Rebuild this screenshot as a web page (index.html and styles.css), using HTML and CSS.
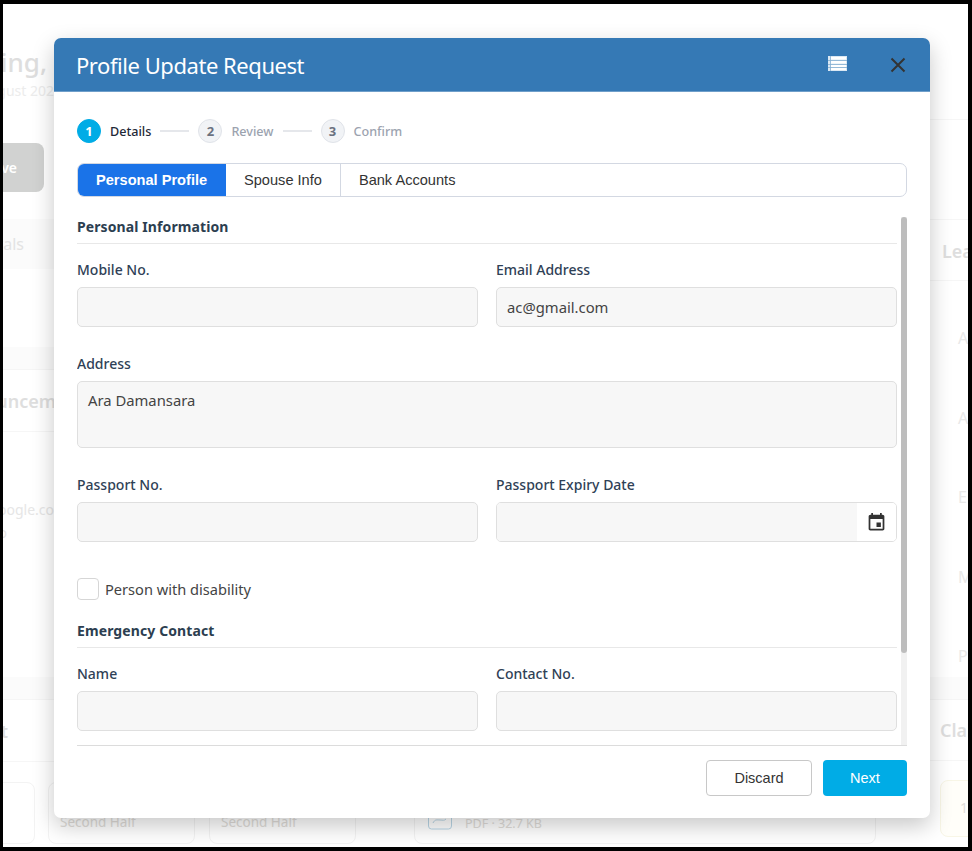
FILE: index.html
```html
<!DOCTYPE html>
<html lang="en">
<head>
    <meta charset="UTF-8">
    <meta name="viewport" content="width=device-width, initial-scale=1.0">
    <title>Profile Update Request</title>
    <link rel="stylesheet" href="styles.css">
</head>
<body>
    <div class="frame">
        <!-- dashboard behind the dialog -->
        <div class="dash">
            <div class="dash-top">
                <div class="dash-left">
                    <h2 class="greeting">Good Morning,</h2>
                    <p class="today">Monday, 4 August 202</p>
                    <div class="leave-btn">Apply Leave</div>
                    <div class="strip">Approvals</div>
                    <div class="band band-first"></div>
                    <div class="dash-head head-news">Announcements</div>
                    <div class="news">
                        <p>https://www.google.co</p>
                        <p>info</p>
                    </div>
                    <div class="band"></div>
                    <div class="dash-head head-pay">Payment</div>
                </div>
                <div class="dash-right">
                    <div class="dash-head head-leave">Leave Balance</div>
                    <ul class="leave-list">
                        <li>Annual</li>
                        <li>Advance</li>
                        <li>Emergency</li>
                        <li>Medical</li>
                        <li>Paternity</li>
                    </ul>
                    <div class="band"></div>
                    <div class="dash-head head-claims">Claims</div>
                </div>
            </div>
            <div class="dash-bottom">
                <div class="slot slot-a"></div>
                <div class="slot slot-b">Second Half</div>
                <div class="slot slot-c">Second Half</div>
                <div class="slot slot-file">
                    <svg class="file-icon" viewBox="0 0 24 16" width="24" height="16" fill="none" stroke="#b9d6e6" stroke-width="1">
                        <rect x="0.5" y="-8" width="23" height="23" rx="3"/>
                        <path d="M5 9c2-4 4-3 7-3s4 1 6-1"/>
                    </svg>
                    <span>PDF · 32.7 KB</span>
                </div>
                <div class="slot slot-claim">1</div>
            </div>
        </div>

        <div class="modal">
            <div class="modal-header">
                <h1>Profile Update Request</h1>
                <svg class="list-icon" viewBox="0 0 19 15" width="19" height="15">
                    <path fill="#dbe8f3" d="M0 0h19v15H0z"/>
                    <path fill="#fff" d="M3 1h15v2.500H3zM3 5h15v2.500H3zM3 9h15v2H3zM3 12h15v2H3z"/>
                    <path fill="#7fabd0" d="M0 4h19v.7H0zM0 8h19v.7H0zM0 11.200h19v.7H0zM2 0h.7v15H2z"/>
                </svg>
                <svg class="close-icon" viewBox="0 0 16 16" width="16" height="16" fill="none" stroke="#333" stroke-width="2">
                    <path d="M1.500 1.500l13 13M14.500 1.500l-13 13"/>
                </svg>
            </div>
            <div class="modal-body">
                <div class="stepper">
                    <span class="step-num active">1</span>
                    <span class="step-name active">Details</span>
                    <span class="step-line"></span>
                    <span class="step-num">2</span>
                    <span class="step-name">Review</span>
                    <span class="step-line"></span>
                    <span class="step-num">3</span>
                    <span class="step-name">Confirm</span>
                </div>
                <div class="tabs">
                    <div class="tab active">Personal Profile</div>
                    <div class="tab">Spouse Info</div>
                    <div class="tab">Bank Accounts</div>
                </div>
                <div class="scroll-area">
                    <div class="scroll-content">
                        <h3 class="section-title">Personal Information</h3>
                        <div class="row">
                            <div class="field">
                                <label for="mobile">Mobile No.</label>
                                <input id="mobile" type="text">
                            </div>
                            <div class="field">
                                <label for="email">Email Address</label>
                                <input id="email" type="text" value="ac@gmail.com">
                            </div>
                        </div>
                        <div class="field">
                            <label for="address">Address</label>
                            <textarea id="address">Ara Damansara</textarea>
                        </div>
                        <div class="row">
                            <div class="field">
                                <label for="passport">Passport No.</label>
                                <input id="passport" type="text">
                            </div>
                            <div class="field">
                                <label for="expiry">Passport Expiry Date</label>
                                <div class="date-input">
                                    <input id="expiry" type="text">
                                    <span class="date-btn">
                                        <svg viewBox="0 0 24 24" width="21" height="21" fill="#333">
                                            <path d="M17 12h-5v5h5v-5zM16 1v2H8V1H6v2H5c-1.110 0-1.990.9-1.990 2L3 19c0 1.100.89 2 2 2h14c1.100 0 2-.9 2-2V5c0-1.100-.9-2-2-2h-1V1h-2zm3 18H5V8h14v11z"/>
                                        </svg>
                                    </span>
                                </div>
                            </div>
                        </div>
                        <label class="check">
                            <input type="checkbox">
                            <span>Person with disability</span>
                        </label>
                        <h3 class="section-title">Emergency Contact</h3>
                        <div class="row">
                            <div class="field">
                                <label for="contact-name">Name</label>
                                <input id="contact-name" type="text">
                            </div>
                            <div class="field">
                                <label for="contact-no">Contact No.</label>
                                <input id="contact-no" type="text">
                            </div>
                        </div>
                    </div>
                    <div class="scroll-track">
                        <div class="scroll-thumb"></div>
                    </div>
                </div>
            </div>
            <div class="modal-footer">
                <button class="btn-discard">Discard</button>
                <button class="btn-next">Next</button>
            </div>
        </div>
    </div>
</body>
</html>
```

FILE: styles.css
```css
* {
    box-sizing: border-box;
}

body {
    margin: 0;
    font-family: "Noto Sans", "Open Sans", sans-serif;
    background: #000;
}

.frame {
    position: relative;
    width: 972px;
    height: 851px;
    border: solid #000;
    border-width: 4px 4px 4px 3px;
    background: #fff;
    overflow: hidden;
}

/* background page */
.dash {
    display: flex;
    flex-direction: column;
    height: 100%;
    color: #dedede;
}

.dash-top {
    display: flex;
    justify-content: space-between;
    height: 758px;
    flex: none;
}

.dash-left {
    width: 51px;
    display: flex;
    flex-direction: column;
    align-items: flex-end;
    white-space: nowrap;
}

.dash-left > * {
    flex: none;
}

.dash-right {
    width: 39px;
    white-space: nowrap;
    display: flex;
    flex-direction: column;
    overflow: hidden;
    border-top: 1px solid #f6f6f6;
    margin-top: 115px;
}

.greeting {
    margin: 39px 7px 0 0;
    font-size: 26px;
    font-weight: 500;
    line-height: 38px;
}

.today {
    margin: 0;
    font-size: 14px;
    line-height: 20px;
    color: #ececec;
}

.leave-btn {
    width: 150px;
    height: 49px;
    margin: 42px 10px 0 0;
    padding-right: 27px;
    background: #d1d2d1;
    border-radius: 8px;
    color: #fff;
    font-size: 14px;
    font-weight: 600;
    line-height: 49px;
    text-align: right;
}

.strip {
    width: 200px;
    height: 50px;
    margin-top: 27px;
    padding-right: 30px;
    background: #fbfbfb;
    font-size: 16px;
    line-height: 50px;
    text-align: right;
    color: #e3e3e3;
}

.band {
    width: 100%;
    height: 23px;
    background: #fbfbfb;
    border-bottom: 1px solid #f5f5f5;
}

.band-first {
    margin-top: 78px;
}

.dash-head {
    width: 100%;
    height: 62px;
    font-size: 18px;
    font-weight: 600;
    line-height: 62px;
    border-bottom: 1px solid #f6f6f6;
    overflow: hidden;
}

.head-news {
    text-indent: -53px;
}

.head-pay {
    text-indent: -73px;
}

.head-leave {
    margin-top: 99px;
    padding-left: 13px;
    border-top: 1px solid #f6f6f6;
}

.head-claims {
    padding-left: 11px;
    margin-top: -1px;
}

.news {
    height: 245px;
    width: 100%;
    padding-top: 66px;
    color: #e6e6e6;
    font-size: 14px;
    line-height: 23px;
    display: flex;
    flex-direction: column;
}

.news p {
    margin: 0;
    align-self: flex-end;
}

.news p:last-child {
    margin-right: 47px;
}

.leave-list {
    list-style: none;
    margin: 0;
    padding: 0 0 0 29px;
    height: 396px;
    font-size: 16px;
    color: #e8e8e8;
}

.leave-list li {
    height: 79.500px;
    padding-top: 45px;
    line-height: 24px;
}

.dash-bottom {
    display: flex;
    height: 62px;
    margin-top: 20px;
    flex: none;
}

.slot {
    flex: none;
    height: 62px;
    border: 1px solid #f3f3f3;
    border-radius: 8px;
    font-size: 13.500px;
    line-height: 18px;
    color: #e0ddd9;
    padding: 30px 0 0 11px;
}

.slot-a {
    width: 42px;
    margin-left: -10px;
}

.slot-b {
    width: 147px;
    margin-left: 13px;
}

.slot-c {
    width: 147px;
    margin-left: 14px;
}

.slot-file {
    width: 462px;
    margin-left: 58px;
    padding: 31px 0 0 13px;
    display: flex;
    gap: 13px;
    font-size: 12.500px;
}

.file-icon {
    flex: none;
}

.slot-file span {
    padding-top: 1px;
}

.slot-claim {
    width: 120px;
    height: 57px;
    margin: -2px 0 0 64px;
    background: #fffef9;
    border-color: #f8f6e6;
    padding: 18px 0 0 19px;
    font-size: 14px;
}

/* dialog */
.modal {
    position: absolute;
    left: 51px;
    top: 34px;
    width: 876px;
    height: 780px;
    display: flex;
    flex-direction: column;
    background: #fff;
    border-radius: 7px;
    box-shadow: 0 8px 22px rgba(0, 0, 0, 0.22);
    overflow: hidden;
}

.modal-header {
    height: 54px;
    flex: none;
    display: flex;
    align-items: center;
    padding: 0 24px 0 22px;
    background: #3579b5;
    border-bottom: 1px solid #6f9fca;
}

.modal-header h1 {
    margin: 0;
    flex: 1;
    font-size: 22px;
    font-weight: 400;
    letter-spacing: -0.45px;
    color: #fff;
}

.list-icon {
    margin: 0 43px 3px 0;
}

.close-icon {
    margin-top: 1px;
}

.modal-body {
    flex: 1;
    min-height: 0;
    display: flex;
    flex-direction: column;
    padding: 26px 23px 0;
}

.stepper {
    display: flex;
    align-items: center;
    height: 25px;
    flex: none;
    font-size: 12.600px;
    font-weight: 500;
    color: #9ca3af;
}

.step-num {
    width: 24px;
    height: 24px;
    border-radius: 50%;
    border: 1px solid #e0e3e9;
    background: #f1f3f6;
    color: #6b7280;
    font-size: 13px;
    font-weight: 700;
    line-height: 22px;
    text-align: center;
}

.step-num.active {
    border-color: #00ace6;
    background: #00ace6;
    color: #fff;
}

.step-name {
    margin-left: 9px;
    padding-top: 1px;
}

.step-name.active {
    color: #1f2937;
}

.step-line {
    width: 29px;
    height: 2px;
    margin: 0 9px;
    background: #e5e7eb;
}

.tabs {
    display: flex;
    flex: none;
    height: 34px;
    margin: 20px 0;
    border: 1px solid #d3d8e2;
    border-radius: 7px;
    overflow: hidden;
    font-family: "Liberation Sans", Arial, sans-serif;
    font-size: 14.600px;
    color: #333;
}

.tab {
    padding: 0 18px;
    line-height: 32px;
    border-right: 1px solid #d3d8e2;
}

.tab:last-child {
    border-right: none;
}

.tab.active {
    width: 148px;
    background: #1a73e8;
    color: #fff;
    font-weight: 700;
    border-right: none;
}

.scroll-area {
    flex: 1;
    min-height: 0;
    display: flex;
    border-bottom: 1px solid #dcdcdc;
}

.scroll-content {
    flex: 1;
    min-width: 0;
    overflow: hidden;
    padding-right: 4px;
}

.scroll-track {
    flex: none;
    width: 6px;
    background: #f1f1f1;
}

.scroll-thumb {
    height: 436px;
    background: #bdbdbd;
    border-radius: 3px;
}

.section-title {
    margin: 0 0 16px;
    height: 27px;
    font-size: 14px;
    font-weight: 700;
    letter-spacing: 0.1px;
    line-height: 20px;
    color: #2c3e50;
    border-bottom: 1px solid #e8e8e8;
}

.row {
    display: grid;
    grid-template-columns: 1fr 1fr;
    gap: 18px;
}

.field {
    margin-bottom: 27px;
}

.field label {
    display: block;
    margin-bottom: 8px;
    height: 19px;
    font-size: 14px;
    font-weight: 500;
    line-height: 19px;
    color: #2f4156;
}

.field input,
.field textarea {
    display: block;
    width: 100%;
    height: 40px;
    padding: 0 10px;
    border: 1px solid #dfdfdf;
    border-radius: 5px;
    background: #f7f7f7;
    font-family: inherit;
    font-size: 14.800px;
    color: #444;
    resize: none;
}

.field textarea {
    height: 67px;
    padding-top: 8px;
}

.date-input {
    display: flex;
    height: 40px;
    border: 1px solid #dfdfdf;
    border-radius: 5px;
    overflow: hidden;
}

.date-input input {
    flex: 1;
    height: 38px;
    border: none;
    border-radius: 0;
}

.date-btn {
    width: 39px;
    display: flex;
    align-items: center;
    justify-content: center;
    background: #fff;
}

.check {
    display: flex;
    align-items: center;
    gap: 6px;
    margin: 9px 0 0;
    height: 22px;
    font-size: 14.600px;
    color: #444;
}

.check input {
    appearance: none;
    width: 22px;
    height: 22px;
    margin: 0;
    border: 1px solid #d6d6d6;
    border-radius: 4px;
    background: #fff;
}

.check + .section-title {
    margin-top: 21px;
}

.modal-footer {
    flex: none;
    height: 72px;
    display: flex;
    justify-content: flex-end;
    gap: 11px;
    padding: 14px 23px 0;
}

.modal-footer button {
    height: 36px;
    border-radius: 4px;
    font-family: "Liberation Sans", Arial, sans-serif;
    font-size: 14.500px;
}

.btn-discard {
    width: 106px;
    border: 1px solid #c8c8c8;
    background: #fff;
    color: #333;
}

.btn-next {
    width: 84px;
    border: none;
    background: #00ace6;
    color: #fff;
}
```
